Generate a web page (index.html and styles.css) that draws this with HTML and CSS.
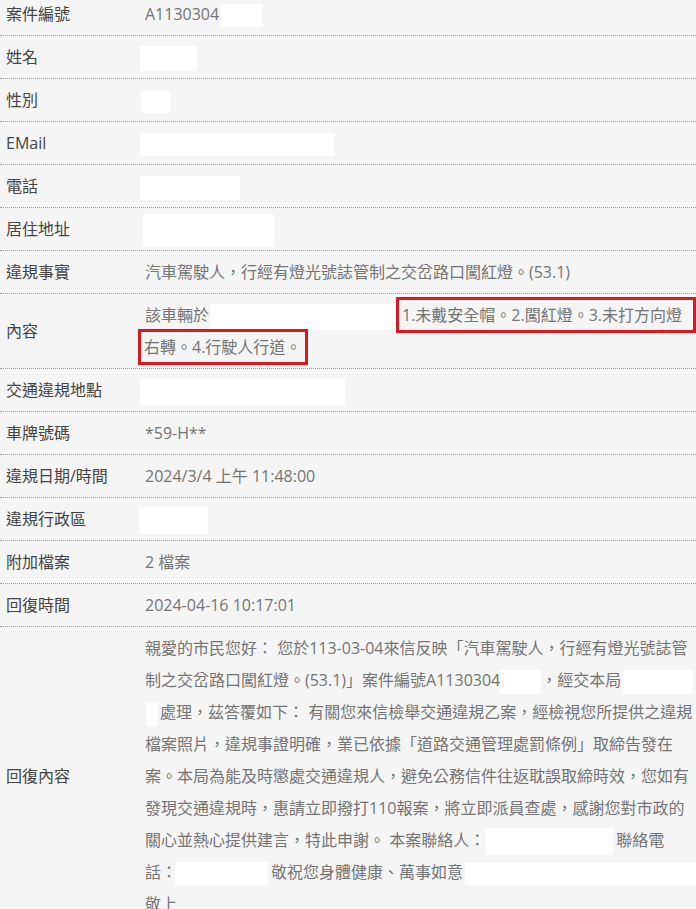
FILE: index.html
```html
<!DOCTYPE html>
<html lang="zh-Hant">
<head>
<meta charset="utf-8">
<title>案件資料</title>
<link rel="stylesheet" href="styles.css">
</head>
<body>
<div class="case-table">
  <div class="row">
    <div class="label">案件編號</div>
    <div class="value">A1130304<span class="redact r-case"></span></div>
  </div>
  <div class="row">
    <div class="label">姓名</div>
    <div class="value"><span class="redact r-name"></span></div>
  </div>
  <div class="row">
    <div class="label">性別</div>
    <div class="value"><span class="redact r-sex"></span></div>
  </div>
  <div class="row">
    <div class="label">EMail</div>
    <div class="value"><span class="redact r-mail"></span></div>
  </div>
  <div class="row">
    <div class="label">電話</div>
    <div class="value"><span class="redact r-tel"></span></div>
  </div>
  <div class="row">
    <div class="label">居住地址</div>
    <div class="value"><span class="redact r-addr"></span></div>
  </div>
  <div class="row">
    <div class="label">違規事實</div>
    <div class="value">汽車駕駛人，行經有燈光號誌管制之交岔路口闖紅燈。(53.1)</div>
  </div>
  <div class="row">
    <div class="label">內容</div>
    <div class="value nowrap">該車輛於<span class="redact r-when"></span><span class="mark mark-first">1.未戴安全帽。2.闖紅燈。3.未打方向燈</span><br><span class="mark mark-second">右轉。4.行駛人行道。</span></div>
  </div>
  <div class="row">
    <div class="label">交通違規地點</div>
    <div class="value"><span class="redact r-place"></span></div>
  </div>
  <div class="row">
    <div class="label">車牌號碼</div>
    <div class="value">*59-H**</div>
  </div>
  <div class="row">
    <div class="label">違規日期/時間</div>
    <div class="value">2024/3/4 上午 11:48:00</div>
  </div>
  <div class="row">
    <div class="label">違規行政區</div>
    <div class="value"><span class="redact r-dist"></span></div>
  </div>
  <div class="row">
    <div class="label">附加檔案</div>
    <div class="value">2 檔案</div>
  </div>
  <div class="row">
    <div class="label">回復時間</div>
    <div class="value">2024-04-16 10:17:01</div>
  </div>
  <div class="row">
    <div class="label">回復內容</div>
    <div class="value nowrap">親愛的市民您好： 您於113-03-04來信反映「汽車駕駛人，行經有燈光號誌管<br>制之交岔路口闖紅燈。(53.1)」案件編號A1130304<span class="redact r-case2"></span>，經交本局<span class="redact r-unit"></span><br><span class="redact r-unit2"></span>處理，茲答覆如下： 有關您來信檢舉交通違規乙案，經檢視您所提供之違規<br>檔案照片，違規事證明確，業已依據「道路交通管理處罰條例」取締告發在<br>案。本局為能及時懲處交通違規人，避免公務信件往返耽誤取締時效，您如有<br>發現交通違規時，惠請立即撥打110報案，將立即派員查處，感謝您對市政的<br>關心並熱心提供建言，特此申謝。 本案聯絡人：<span class="redact r-contact"></span>聯絡電<br>話：<span class="redact r-phone"></span>敬祝您身體健康、萬事如意<span class="redact r-sign"></span><br>敬上</div>
  </div>
</div>
</body>
</html>
```

FILE: styles.css
```css
html, body {
  margin: 0;
  padding: 0;
  background: #f5f5f5;
}

body {
  font-family: "Open Sans", "Noto Sans CJK TC", sans-serif;
  font-size: 16px;
  line-height: 32px;
  color: #444;
  overflow: hidden;
}

.case-table {
  margin-top: -7px;
}

.row {
  display: grid;
  grid-template-columns: 145px 1fr;
  border-bottom: 1px dotted #9a9a9a;
  padding: 5px 0;
}

.label {
  align-self: center;
  padding-left: 6px;
  color: #444;
  white-space: nowrap;
}

.value {
  color: #747474;
  min-width: 0;
  line-height: 32px;
}

.nowrap {
  white-space: nowrap;
}

.redact {
  display: inline-block;
  background: #fff;
  vertical-align: middle;
  margin-top: -10px;
  margin-bottom: -10px;
}

.r-case  { width: 41px; height: 23px; margin-left: 2px; }
.r-name  { width: 57px; height: 25px; margin-left: -5px; }
.r-sex   { width: 29px; height: 22px; margin-left: -4px; }
.r-mail  { width: 194px; height: 23px; margin-left: -5px; }
.r-tel   { width: 100px; height: 24px; margin-left: -5px; }
.r-addr  { width: 131px; height: 33px; margin-left: -2px; }
.r-when  { width: 186px; height: 26px; margin-left: 1px; }
.r-place { width: 205px; height: 26px; margin-left: -5px; }
.r-dist  { width: 69px; height: 27px; margin-left: -6px; }
.r-case2 { width: 41px; height: 24px; }
.r-unit  { width: 70px; height: 24px; margin-left: 2px; }
.r-unit2 { width: 12px; height: 24px; margin-left: 1px; margin-right: 2px; }
.r-contact { width: 127px; height: 27px; margin-left: 1px; margin-right: 3px; }
.r-phone { width: 93px; height: 23px; margin-left: -2px; margin-right: 3px; }
.r-sign  { width: 231px; height: 22px; margin-left: 2px; }

.mark {
  border: 3px solid #d71920;
  padding: 4px 11px 4px 3px;
  color: #747474;
}

.mark-second {
  margin-left: -7px;
  padding-right: 4px;
}
```
